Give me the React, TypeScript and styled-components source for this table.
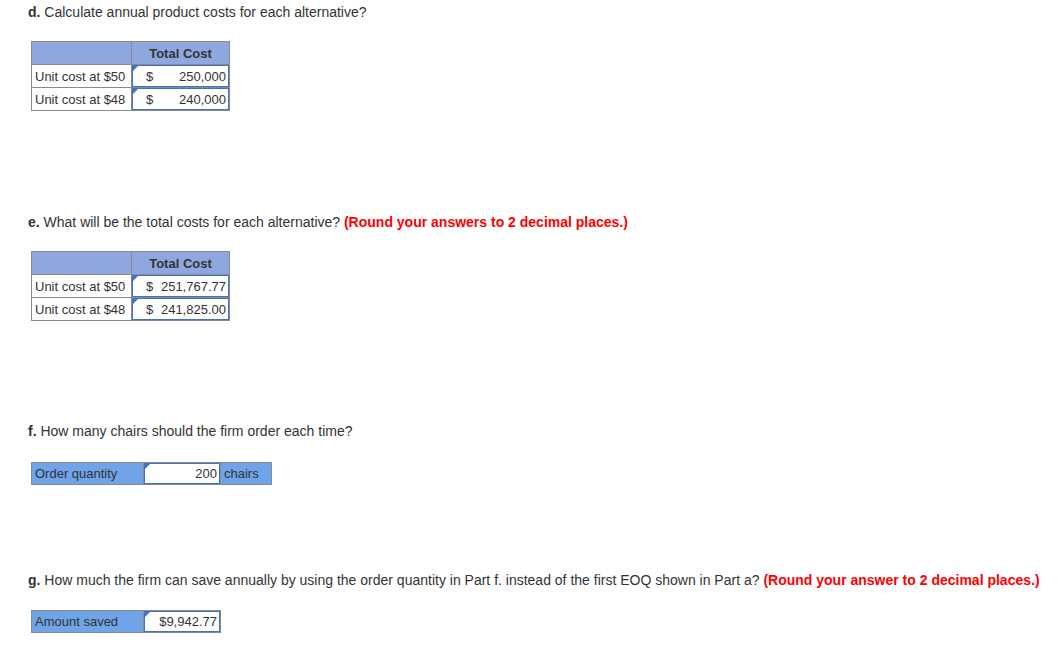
import React from "react";
import styled, { createGlobalStyle } from "styled-components";

const Global = createGlobalStyle`
  html, body { margin: 0; padding: 0; background: #fff; }
  body { font-family: "Liberation Sans", Arial, sans-serif; color: #333; }
`;

const Page = styled.div`
  padding: 4px 0 0 28px;
  display: flex;
  flex-direction: column;
  align-items: flex-start;
`;

const Question = styled.p<{ $after: number; $before?: number }>`
  margin: ${(p) => p.$before ?? 0}px 0 ${(p) => p.$after}px 0;
  font-size: 14px;
  line-height: 16px;
  color: #333;
  white-space: nowrap;
  b { font-weight: bold; color: #333; }
`;

const Red = styled.span`
  color: #f00;
  font-weight: bold;
`;

const Table = styled.table`
  margin-left: 3px;
  border-collapse: collapse;
  font-size: 13px;
  color: #333;
  td, th { border: 1px solid #8a8a8a; padding: 0; }
`;

const HeadEmpty = styled.th`
  width: 98px;
  height: 22px;
  background: #8ea8df;
`;

const HeadCell = styled.th`
  width: 97px;
  height: 22px;
  background: #8ea8df;
  font-weight: bold;
  text-align: center;
  color: #333;
`;

const LabelCell = styled.td<{ $w: number; $h: number; $blue?: boolean }>`
  width: ${(p) => p.$w}px;
  height: ${(p) => p.$h}px;
  background: ${(p) => (p.$blue ? "#6fa4e8" : "#fff")};
  padding: 0 0 0 3px !important;
  white-space: nowrap;
  box-sizing: border-box;
`;

const InputCell = styled.td<{ $w: number }>`
  width: ${(p) => p.$w}px;
  position: relative;
`;

const InputBox = styled.div<{ $justify: string; $h: number }>`
  box-sizing: border-box;
  height: ${(p) => p.$h}px;
  border: 1px solid #3f73c8;
  background: #fff;
  display: flex;
  align-items: center;
  justify-content: ${(p) => p.$justify};
  padding: 0 2px 0 13px;
  white-space: nowrap;
`;

const Flag = styled.span`
  position: absolute;
  top: 1px;
  left: 1px;
  width: 0;
  height: 0;
  border-left: 5px solid #3f73c8;
  border-bottom: 5px solid transparent;
`;

const Unit = styled.td`
  width: 51px;
  background: #6fa4e8;
  padding: 0 0 0 3px !important;
  box-sizing: border-box;
`;

function CostTable({ rows }: { rows: { label: string; dollar: string; amount: string }[] }) {
  return (
    <Table>
      <thead>
        <tr>
          <HeadEmpty />
          <HeadCell>Total Cost</HeadCell>
        </tr>
      </thead>
      <tbody>
        {rows.map((r) => (
          <tr key={r.label}>
            <LabelCell $w={100} $h={22}>{r.label}</LabelCell>
            <InputCell $w={97}>
              <Flag />
              <InputBox $justify="space-between" $h={22}>
                <span>{r.dollar}</span>
                <span>{r.amount}</span>
              </InputBox>
            </InputCell>
          </tr>
        ))}
      </tbody>
    </Table>
  );
}

function SingleRow({ label, value, unit }: { label: string; value: string; unit?: string }) {
  return (
    <Table>
      <tbody>
        <tr>
          <LabelCell $w={112} $h={21} $blue>{label}</LabelCell>
          <InputCell $w={76}>
            <Flag />
            <InputBox $justify="flex-end" $h={21}>{value}</InputBox>
          </InputCell>
          {unit && <Unit>{unit}</Unit>}
        </tr>
      </tbody>
    </Table>
  );
}

export default function App() {
  return (
    <>
      <Global />
      <Page>
        <Question $after={21}>
          <b>d.</b> Calculate annual product costs for each alternative?
        </Question>
        <CostTable
          rows={[
            { label: "Unit cost at $50", dollar: "$", amount: "250,000" },
            { label: "Unit cost at $48", dollar: "$", amount: "240,000" },
          ]}
        />
        <Question $before={103} $after={21}>
          <b>e.</b> What will be the total costs for each alternative? <Red>(Round your answers to 2 decimal places.)</Red>
        </Question>
        <CostTable
          rows={[
            { label: "Unit cost at $50", dollar: "$", amount: "251,767.77" },
            { label: "Unit cost at $48", dollar: "$", amount: "241,825.00" },
          ]}
        />
        <Question $before={102} $after={23}>
          <b>f.</b> How many chairs should the firm order each time?
        </Question>
        <SingleRow label="Order quantity" value="200" unit="chairs" />
        <Question $before={87} $after={22}>
          <b>g.</b> How much the firm can save annually by using the order quantity in Part f. instead of the first EOQ shown in Part a? <Red>(Round your answer to 2 decimal places.)</Red>
        </Question>
        <SingleRow label="Amount saved" value="$9,942.77" />
      </Page>
    </>
  );
}
